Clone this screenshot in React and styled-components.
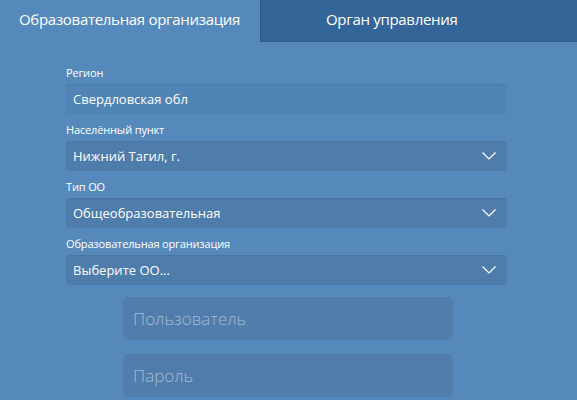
import React from 'react';
import styled, { createGlobalStyle } from 'styled-components';

const GlobalStyle = createGlobalStyle`
  html, body {
    margin: 0;
    padding: 0;
    background: #5589bc;
    font-family: 'Open Sans', 'Liberation Sans', sans-serif;
  }
`;

const Page = styled.div`
  width: 577px;
  height: 400px;
  overflow: hidden;
  background: #5589bc;
`;

const Tabs = styled.div`
  display: flex;
  height: 42px;
`;

const Tab = styled.div`
  display: flex;
  align-items: center;
  height: 100%;
  box-sizing: border-box;
  padding-bottom: 4px;
  color: #ffffff;
  font-size: 15px;
  letter-spacing: -0.3px;
  white-space: nowrap;
  ${p => p.active ? `
    width: 260px;
    padding-left: 19px;
    background: transparent;
  ` : `
    flex: 1;
    padding-left: 66px;
    background: #336598;
    box-shadow: inset 1px 0 0 #2c5a88, inset 0 -1px 0 #2f5d8c;
  `}
`;

const Form = styled.div`
  margin: 23px 0 0 66px;
  width: 441px;
`;

const Field = styled.div`
  margin-bottom: 8px;
`;

const Label = styled.div`
  color: #ffffff;
  font-size: 11px;
  letter-spacing: -0.15px;
  line-height: 15px;
  margin-bottom: 4px;
`;

const Box = styled.div`
  display: flex;
  align-items: center;
  justify-content: space-between;
  height: 30px;
  box-sizing: border-box;
  padding: 0 11px 0 7px;
  border-radius: 4px;
  color: #ffffff;
  font-size: 13px;
  background: ${p => p.select ? '#4e7cab' : '#5083b6'};
  box-shadow: inset 0 1px 1px rgba(0, 0, 0, 0.06);
`;

const Login = styled.div`
  display: flex;
  flex-direction: column;
  gap: 14px;
  margin: 12px 0 0 123px;
  width: 330px;
`;

const LoginInput = styled.div`
  height: 43px;
  box-sizing: border-box;
  padding-left: 10px;
  display: flex;
  align-items: center;
  border-radius: 5px;
  background: #507dab;
  color: #a3bbd5;
  font-size: 17px;
  font-weight: 300;
`;

const Chevron = () => (
  <svg width="14" height="8" viewBox="0 0 14 8">
    <path d="M0.5 0.5 L7 7 L13.5 0.5" fill="none" stroke="#ffffff" strokeWidth="1.2" />
  </svg>
);

const fields = [
  { label: 'Регион', value: 'Свердловская обл' },
  { label: 'Населённый пункт', value: 'Нижний Тагил, г.', select: true },
  { label: 'Тип ОО', value: 'Общеобразовательная', select: true },
  { label: 'Образовательная организация', value: 'Выберите ОО...', select: true },
];

export default function App() {
  return (
    <Page>
      <GlobalStyle />
      <Tabs>
        <Tab active>Образовательная организация</Tab>
        <Tab>Орган управления</Tab>
      </Tabs>
      <Form>
        {fields.map(f => (
          <Field key={f.label}>
            <Label>{f.label}</Label>
            <Box select={f.select}>
              <span>{f.value}</span>
              {f.select && <Chevron />}
            </Box>
          </Field>
        ))}
      </Form>
      <Login>
        <LoginInput>Пользователь</LoginInput>
        <LoginInput>Пароль</LoginInput>
      </Login>
    </Page>
  );
}
